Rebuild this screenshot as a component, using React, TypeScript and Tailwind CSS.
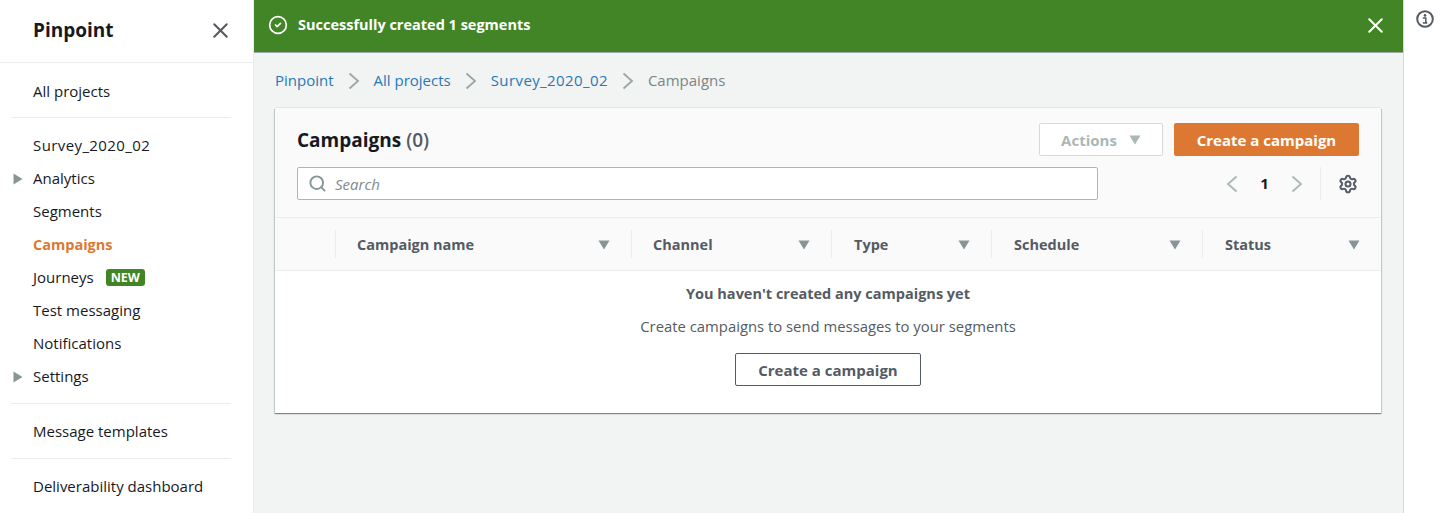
import { X, Search, Settings, CircleCheck } from "lucide-react";

const columns = [
  { name: "Campaign name", width: "w-[296px] pl-[21px]" },
  { name: "Channel", width: "w-[200px] pl-[21px]" },
  { name: "Type", width: "w-[160px] pl-[22px]" },
  { name: "Schedule", width: "w-[211px] pl-[22px]" },
  { name: "Status", width: "w-[179px] pl-[22px]" },
];

function Caret({ color = "#879596" }: { color?: string }) {
  return (
    <svg width="12" height="10" viewBox="0 0 12 10" className="shrink-0">
      <path d="M0.5 0.5H11.5L6 9.5Z" fill={color} />
    </svg>
  );
}

function Chevron({ left, color = "#aab7b8" }: { left?: boolean; color?: string }) {
  return (
    <svg width="12" height="18" viewBox="0 0 12 18" fill="none" stroke={color} strokeWidth="1.8" className="shrink-0">
      <path d={left ? "M10.5 1.5L2 9L10.5 16.5" : "M1.5 1.5L10 9L1.5 16.5"} />
    </svg>
  );
}

function NavItem({ label, expandable, active, wide, children }: { label: string; expandable?: boolean; active?: boolean; wide?: boolean; children?: React.ReactNode }) {
  return (
    <div className="flex h-[33px] items-center pl-[13px]">
      <div className="flex w-5 shrink-0 items-center">
        {expandable && (
          <svg width="10" height="12" viewBox="0 0 10 12">
            <path d="M0.5 0.5L9.5 6L0.5 11.5Z" fill="#879596" />
          </svg>
        )}
      </div>
      <span className={active ? "text-[14.5px] font-bold text-[#dd7832]" : wide ? "tracking-[0.4px] text-[#16191f]" : "text-[#16191f]"}>{label}</span>
      {children}
    </div>
  );
}

function Divider() {
  return <div className="mx-[11px] h-px w-[220px] bg-[#eaeded]" />;
}

export default function App() {
  return (
    <div className="flex h-[513px] w-[1442px] overflow-hidden bg-white font-['Open_Sans','Noto_Sans',sans-serif] text-[15px] text-[#16191f]">
      <aside className="w-[254px] shrink-0 border-r border-[#eaeded] bg-white">
        <div className="flex h-[63px] items-center justify-between border-b border-[#eaeded] pb-[2px] pl-[33px] pr-[20px]">
          <span className="text-[19px] font-bold">Pinpoint</span>
          <X size={25} strokeWidth={2} className="text-[#545b64]" />
        </div>
        <div className="pt-[12px] pb-[9px]">
          <NavItem label="All projects" />
        </div>
        <Divider />
        <div className="pt-[11px] pb-[10px]">
          <NavItem label="Survey_2020_02" wide />
          <NavItem label="Analytics" expandable />
          <NavItem label="Segments" />
          <NavItem label="Campaigns" active />
          <NavItem label="Journeys">
            <span className="ml-[12px] rounded-[3px] bg-[#418526] px-[5px] text-[12.5px] font-bold leading-[17px] text-white">NEW</span>
          </NavItem>
          <NavItem label="Test messaging" />
          <NavItem label="Notifications" />
          <NavItem label="Settings" expandable />
        </div>
        <Divider />
        <div className="pt-[11px] pb-[10px]">
          <NavItem label="Message templates" />
        </div>
        <Divider />
        <div className="pt-[11px]">
          <NavItem label="Deliverability dashboard" />
        </div>
      </aside>

      <main className="flex w-[1149px] shrink-0 flex-col bg-[#f2f3f3]">
        <div className="flex h-[53px] items-center justify-between border-b border-[#9fa6a6] bg-[#418526] pb-[2px] pl-[14px] pr-[15px] text-white">
          <div className="flex items-center gap-[10px]">
            <CircleCheck size={20} strokeWidth={2} />
            <span className="text-[14.5px] font-bold">Successfully created 1 segments</span>
          </div>
          <X size={25} strokeWidth={2} />
        </div>

        <nav className="flex h-[55px] items-center pl-[21px] text-[#1f7ab8]">
          <span>Pinpoint</span>
          <div className="mx-[14px]"><Chevron color="#9aa5a6" /></div>
          <span>All projects</span>
          <div className="mx-[14px]"><Chevron color="#9aa5a6" /></div>
          <span className="tracking-[0.4px]">Survey_2020_02</span>
          <div className="mx-[14px]"><Chevron color="#9aa5a6" /></div>
          <span className="text-[#7a8688]">Campaigns</span>
        </nav>

        <section className="ml-[21px] w-[1106px] bg-white shadow-[0_1px_1px_0_rgba(0,28,36,0.3),1px_1px_1px_0_rgba(0,28,36,0.15),-1px_1px_1px_0_rgba(0,28,36,0.15),0_-1px_0_0_rgba(0,28,36,0.06)]">
          <div className="h-[110px] border-b border-[#eaeded] bg-[#fafafa] px-[22px] pt-[15px]">
            <div className="flex h-[33px] items-center justify-between">
              <h1 className="pt-[1px] text-[19px] font-bold">
                Campaigns <span className="font-semibold text-[#545b64]">(0)</span>
              </h1>
              <div className="flex gap-[11px]">
                <button className="flex h-[33px] w-[124px] items-center justify-center gap-[12px] rounded-[2px] border border-[#d5dbdb] bg-white pt-[1px] font-bold text-[#aab7b8]">
                  Actions <Caret color="#aab7b8" />
                </button>
                <button className="h-[33px] w-[185px] rounded-[2px] bg-[#dd7832] pt-[1px] font-bold text-white">Create a campaign</button>
              </div>
            </div>
            <div className="mt-[11px] flex h-[33px] items-center justify-between">
              <div className="flex h-[33px] w-[801px] items-center rounded-[2px] border border-[#aab7b8] bg-white pl-[10px]">
                <Search size={19} strokeWidth={2.4} className="text-[#879596]" />
                <span className="ml-[8px] pt-[1px] italic text-[#7f8a8a]">Search</span>
              </div>
              <div className="flex items-center">
                <Chevron left />
                <span className="mx-[22px] w-[9px] text-center font-bold">1</span>
                <Chevron />
                <div className="ml-[17px] h-[33px] w-px bg-[#eaeded]" />
                <Settings size={20} strokeWidth={2.4} className="ml-[17px] mr-[1px] text-[#545b64]" />
              </div>
            </div>
          </div>

          <div className="flex h-[53px] items-center border-b border-[#eaeded] bg-[#fafafa]">
            <div className="w-[60px] shrink-0" />
            {columns.map((col) => (
              <div key={col.name} className={`${col.width} flex h-[28px] shrink-0 items-center justify-between border-l border-[#eaeded] pr-[21px] pt-[1px] text-[14.5px] font-bold text-[#545b64]`}>
                <span>{col.name}</span>
                <Caret />
              </div>
            ))}
          </div>

          <div className="flex h-[142px] flex-col items-center text-[#545b64]">
            <p className="mt-[13px] text-[14.5px] font-bold leading-[20px]">You haven't created any campaigns yet</p>
            <p className="mt-[12px] text-[14.85px] leading-[20px]">Create campaigns to send messages to your segments</p>
            <button className="mt-[17px] h-[33px] w-[186px] rounded-[2px] border border-[#545b64] pt-[1px] font-bold">Create a campaign</button>
          </div>
        </section>
      </main>

      <aside className="flex-1 border-l border-[#d5dbdb] bg-white pl-[12px] pt-[10px]">
        <svg width="18" height="18" viewBox="0 0 18 18" fill="none">
          <circle cx="9" cy="9" r="7.8" stroke="#545b64" strokeWidth="2" />
          <circle cx="9" cy="5.4" r="1.3" fill="#545b64" />
          <path d="M6.8 8H9.8V12.4H11.2M6.8 12.9H11.2" stroke="#545b64" strokeWidth="1.5" />
        </svg>
      </aside>
    </div>
  );
}
